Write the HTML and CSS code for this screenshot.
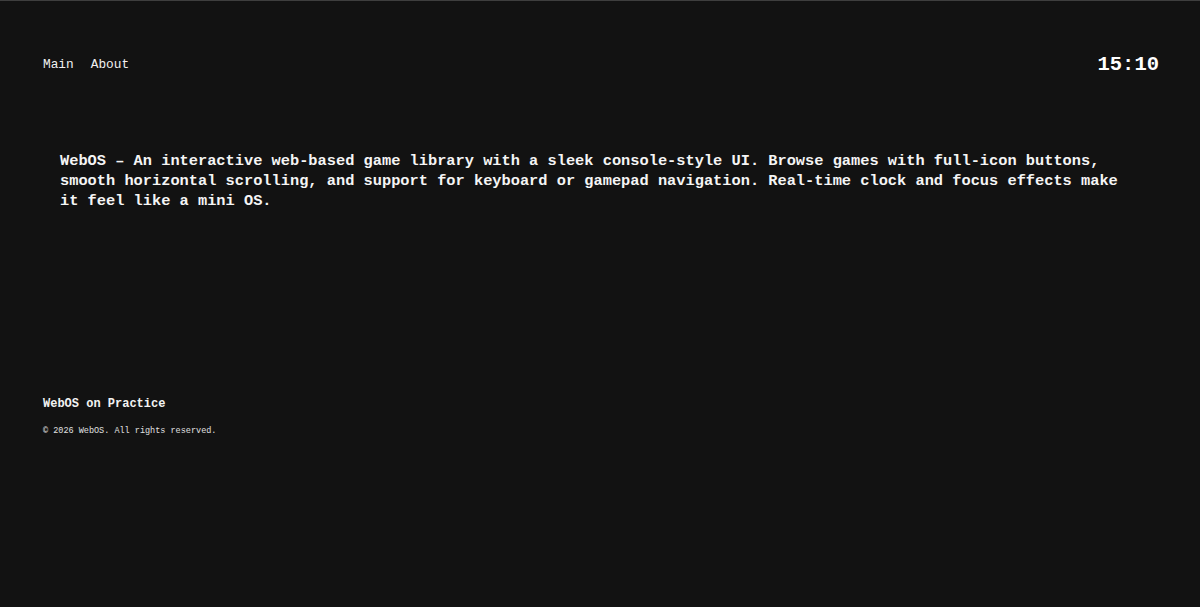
FILE: index.html
```html
<!DOCTYPE html>
<html lang="en">
<head>
<meta charset="utf-8">
<title>WebOS</title>
<link rel="stylesheet" href="styles.css">
</head>
<body>
<div class="page">
  <header class="topbar">
    <nav class="nav">
      <a href="#" class="nav-link">Main</a>
      <a href="#" class="nav-link">About</a>
    </nav>
    <div class="clock">15:10</div>
  </header>
  <main class="content">
    <p class="intro">WebOS – An interactive web-based game library with a sleek console-style UI. Browse games with full-icon buttons, smooth horizontal scrolling, and support for keyboard or gamepad navigation. Real-time clock and focus effects make it feel like a mini OS.</p>
  </main>
  <footer class="footer">
    <h3 class="footer-title">WebOS on Practice</h3>
    <p class="copyright">© 2026 WebOS. All rights reserved.</p>
  </footer>
</div>
</body>
</html>
```

FILE: styles.css
```css
html, body {
  margin: 0;
  padding: 0;
  background: #121212;
}
body {
  color: #f2f2f2;
  font-family: "Liberation Mono", "DejaVu Sans Mono", monospace;
  height: 607px;
  box-sizing: border-box;
  border-top: 1px solid #3e3e3e;
  overflow: hidden;
}
.page {
  display: flex;
  flex-direction: column;
}
.topbar {
  display: flex;
  justify-content: space-between;
  align-items: center;
  height: 128px;
  padding: 0 41px 0 43px;
}
.nav {
  display: flex;
  gap: 17px;
}
.nav-link {
  color: #f0f0f0;
  text-decoration: none;
  font-size: 12.8px;
  line-height: 16px;
}
.clock {
  font-size: 20.5px;
  font-weight: bold;
  color: #ffffff;
  line-height: 26px;
}
.content {
  padding: 22px 60px 0 60px;
}
.intro {
  margin: 0;
  font-size: 15.33px;
  line-height: 20px;
  font-weight: bold;
  color: #f5f5f5;
}
.footer {
  padding: 185px 43px 0 43px;
}
.footer-title {
  margin: 0;
  font-size: 12px;
  line-height: 16px;
  font-weight: bold;
  color: #f2f2f2;
}
.copyright {
  margin: 13px 0 0 0;
  font-size: 8.5px;
  line-height: 12px;
  color: #e0e0e0;
}
```
